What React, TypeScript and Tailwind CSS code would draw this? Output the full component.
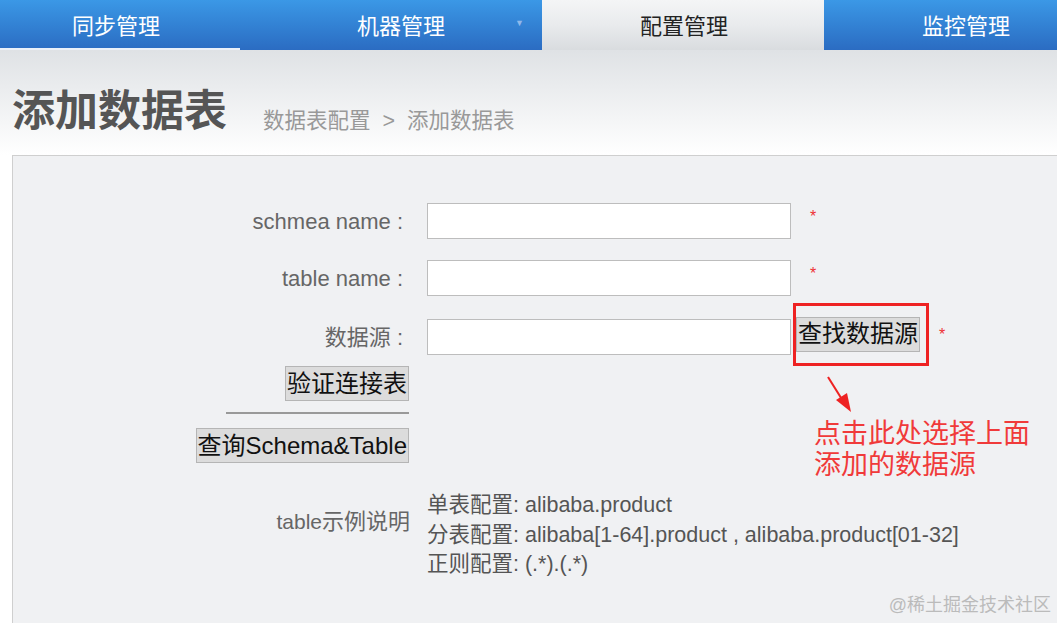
import React from 'react';

const font = { fontFamily: '"Liberation Sans", "Noto Sans CJK SC", sans-serif' };

function Tab({ label, active, arrow, w, pl, underline }: { label: string; active?: boolean; arrow?: boolean; w: string; pl: string; underline?: boolean }) {
  return (
    <div
      className={`relative h-full flex items-center text-[22px] ${w} ${pl} ${
        active
          ? 'bg-gradient-to-b from-[#f4f5f6] via-[#e9ebed] to-[#d9dcdf] text-[#222]'
          : 'bg-gradient-to-b from-[#3b98e6] to-[#2b6cc2] text-white'
      }`}
    >
      <span className="mt-[3px] leading-none">{label}</span>
      {arrow && <span className="absolute right-[18px] top-[17px] text-[9px] text-[#8fb8ea]">▼</span>}
      {underline && <div className="absolute left-0 bottom-0 h-[2px] w-[240px] bg-white/90" />}
    </div>
  );
}

function Field({ children, label }: { children: React.ReactNode; label: string }) {
  return (
    <div className="flex items-center h-[36px]">
      <div className="w-[414px] text-right text-[22px] text-[#666] pr-[24px] whitespace-nowrap">{label}</div>
      {children}
    </div>
  );
}

function Btn({ children }: { children: React.ReactNode }) {
  return (
    <button className="h-[35px] px-[1px] bg-[#dcdcdc] border border-[#b5b5b5] text-[24px] text-[#111] leading-none">
      {children}
    </button>
  );
}

function Star({ className }: { className: string }) {
  return <span className={`text-[#e33] text-[16px] ${className}`}>*</span>;
}

export default function App() {
  return (
    <div className="w-[1057px] h-[623px] overflow-hidden bg-white flex flex-col" style={font}>
      <div className="flex h-[50px] shrink-0">
        <Tab label="同步管理" w="w-[258px]" pl="pl-[72px]" underline />
        <Tab label="机器管理" w="w-[284px]" pl="pl-[99px]" arrow />
        <Tab label="配置管理" w="w-[282px]" pl="pl-[98px]" active />
        <Tab label="监控管理" w="flex-1" pl="pl-[98px]" />
      </div>

      <div className="bg-gradient-to-b from-[#dfe2e5] to-white h-[105px] shrink-0 flex items-end pl-[12px] pb-[22px]">
        <h1 className="text-[43px] font-bold text-[#555] leading-none">添加数据表</h1>
        <div className="ml-[36px] text-[21.5px] text-[#999] leading-none pb-[1px] whitespace-nowrap">数据表配置 &nbsp;&gt;&nbsp; 添加数据表</div>
      </div>

      <div className="ml-[12px] flex-1 bg-[#f0f1f3] border-l border-t border-[#cfcfcf] relative">
        <div className="pt-[47px] flex flex-col">
          <Field label="schmea name :">
            <input className="w-[364px] h-[36px] bg-white border border-[#bdbdbd]" />
            <Star className="ml-[19px] -mt-[8px]" />
          </Field>
          <div className="h-[21px]" />
          <Field label="table name :">
            <input className="w-[364px] h-[36px] bg-white border border-[#bdbdbd]" />
            <Star className="ml-[19px] -mt-[8px]" />
          </Field>
          <div className="h-[23px]" />
          <Field label="数据源 :">
            <input className="w-[364px] h-[36px] bg-white border border-[#bdbdbd]" />
            <div className="ml-[2px] border-[3px] border-[#ee2222] pr-[6px] py-[11px] -mt-[17px] -mb-[11px] flex items-start">
              <Btn>查找数据源</Btn>
            </div>
            <Star className="ml-[10px] -mt-[4px]" />
          </Field>
          <div className="flex">
            <div className="w-[396px] flex flex-col items-end">
              <div className="mt-[11px]">
                <Btn>验证连接表</Btn>
              </div>
              <div className="mt-[11px] w-[183px] h-[2px] bg-[#999]" />
              <div className="mt-[14px]">
                <Btn>查询Schema&amp;Table</Btn>
              </div>
            </div>
            <div className="ml-[405px] pt-[20px] flex flex-col items-start">
              <svg width="40" height="40" viewBox="0 0 40 40" className="ml-[11px]">
                <line x1="3" y1="2" x2="18" y2="26" stroke="#ee2222" strokeWidth="2" />
                <polygon points="11,25 22,18 26,37" fill="#ee2222" />
              </svg>
              <div className="text-[27px] leading-[31px] text-[#f03a3a] mt-[4px] whitespace-nowrap">
                点击此处选择上面
                <br />
                添加的数据源
              </div>
            </div>
          </div>
          <div className="flex mt-[10px]">
            <div className="w-[397px] text-right text-[21px] text-[#666] pt-[14px] whitespace-nowrap">
              table<span className="text-[22px]">示例说明</span>
            </div>
            <div className="ml-[17px] text-[21.5px] text-[#555] leading-[29.5px] whitespace-nowrap">
              <div>单表配置: alibaba.product</div>
              <div>分表配置: alibaba[1-64].product , alibaba.product[01-32]</div>
              <div>正则配置: (.*).(.*)</div>
            </div>
          </div>
        </div>
        <div className="absolute right-[6px] bottom-[4px] text-[18px] text-[#bbb] whitespace-nowrap">@稀土掘金技术社区</div>
      </div>
    </div>
  );
}
